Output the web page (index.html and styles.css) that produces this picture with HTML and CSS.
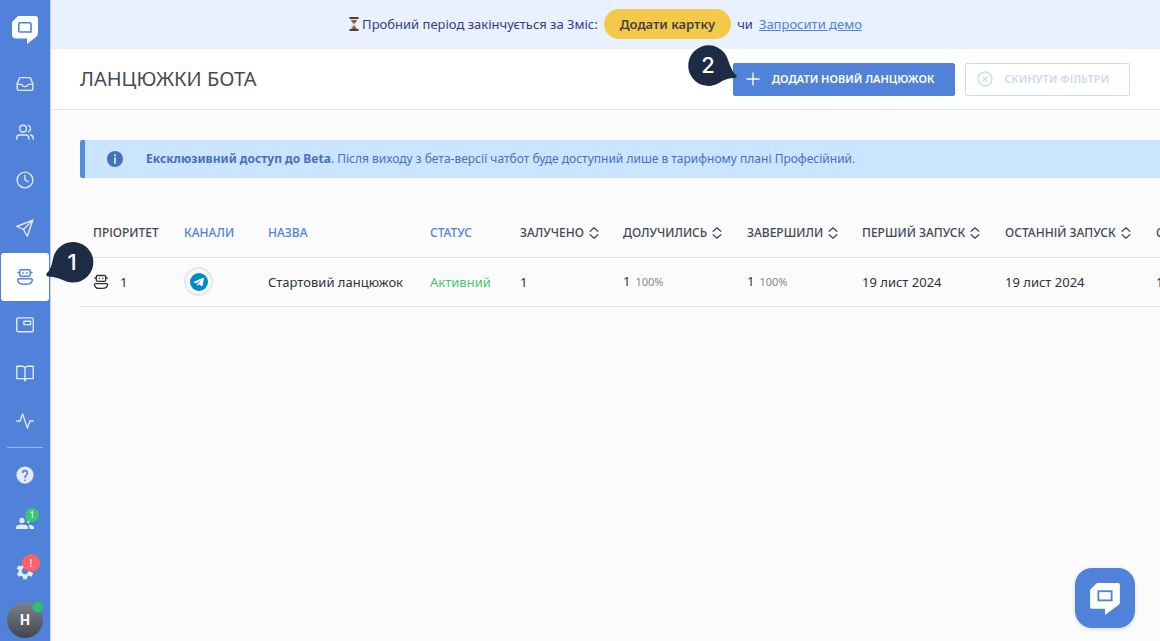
FILE: index.html
```html
<!DOCTYPE html>
<html lang="uk">
<head>
<meta charset="utf-8">
<meta name="viewport" content="width=device-width, initial-scale=1">
<title>Ланцюжки бота</title>
<link rel="stylesheet" href="styles.css">
</head>
<body>
<svg class="defs" aria-hidden="true">
  <symbol id="logo" viewBox="0 0 26 28"><path fill="#fff" d="M6 0H23Q26 0 26 3V17Q26 19.500 24 21L15 28V22.500H4Q0 22.500 0 18.500V6Z"/><path fill="none" stroke="#4f82d9" stroke-width="1.600" d="M8 6.800H17.500Q19 6.800 19 8.300V16H8Q6.800 16 6.800 14.800V8Q6.800 6.800 8 6.800Z"/></symbol>
  <symbol id="chat-logo" viewBox="0 0 26 28"><path fill="#fff" d="M6 0H24.500Q26 0 26 1.500V17Q26 18 25 19L13 28V22.500H1.500Q0 22.500 0 21V6Z"/><rect x="7.200" y="7.200" width="11.600" height="8" fill="none" stroke="#4f82d9" stroke-width="1.600"/></symbol>
  <symbol id="bot" viewBox="0 0 18 18"><g fill="none" stroke="currentColor" stroke-width="1.500" stroke-linecap="round" stroke-linejoin="round"><rect x="3.700" y="1.700" width="10.600" height="6.600" rx="1.500"/><path d="M3.500 4.500H2M14.500 4.500H16M7 4.800V5.200M11 4.800V5.200M3 10.800H15Q16.500 10.800 16.300 12.200Q15.800 16.200 11 16.200H7Q2.200 16.200 1.700 12.200Q1.500 10.800 3 10.800Z"/></g></symbol>
  <symbol id="sort" viewBox="0 0 10 12"><path fill="none" stroke="currentColor" stroke-width="1.200" stroke-linecap="round" stroke-linejoin="round" d="M1.200 4.300L5 .8L8.800 4.300M1.200 7.700L5 11.200L8.800 7.700"/></symbol>
</svg>
<div class="app">
  <nav class="sidebar" aria-label="Головне меню">
    <a class="brand" href="#" aria-label="Головна"><svg width="26" height="28"><use href="#logo"/></svg></a>
    <a class="nav-item" href="#" aria-label="Вхідні"><svg class="line-icon" viewBox="0 0 24 24"><path d="M22 12.500H16.500Q15.500 15.500 12 15.500T7.500 12.500H2M6 3.500H18Q19 3.500 19.500 4.500L22.500 12V18Q22.500 20.500 20 20.500H4Q1.500 20.500 1.500 18V12L4.500 4.500Q5 3.500 6 3.500Z"/></svg></a>
    <a class="nav-item" href="#" aria-label="Контакти"><svg class="line-icon" viewBox="0 0 24 24"><circle cx="9.500" cy="7.500" r="4.500"/><path d="M1 21.500V20Q1 16 5 16H13Q17 16 17 20V21.500M16.500 3.300A4.500 4.500 0 0 1 16.500 11.700M19.500 16Q23 17 23 20.500V21.500"/></svg></a>
    <a class="nav-item" href="#" aria-label="Історія"><svg class="line-icon" viewBox="0 0 24 24"><circle cx="12" cy="12" r="10.500"/><path d="M12 5.500V12L16 14.200"/></svg></a>
    <a class="nav-item" href="#" aria-label="Розсилки"><svg class="line-icon" viewBox="0 0 24 24"><path d="M22.500 1.500L1 10L10 14L15 23ZM22.500 1.500L10 14"/></svg></a>
    <a class="nav-item active" href="#" aria-label="Бот" aria-current="page"><svg class="nav-bot"><use href="#bot"/></svg></a>
    <a class="nav-item" href="#" aria-label="Віджет"><svg class="line-icon" viewBox="0 0 24 24"><rect x="1" y="2.500" width="22" height="18.500" rx="2"/><path d="M10.500 7H19.500V11.500H10.500Z"/></svg></a>
    <a class="nav-item" href="#" aria-label="База знань"><svg class="line-icon" viewBox="0 0 24 24"><path d="M12 5Q11 3 8 3H1V19.500H9Q12 19.500 12 22.500Q12 19.500 15 19.500H23V3H16Q13 3 12 5ZM12 5V22"/></svg></a>
    <a class="nav-item" href="#" aria-label="Активність"><svg class="line-icon" viewBox="0 0 24 24"><path d="M1 12H5.500L8.800 2.500L15.200 21.500L18.500 12H23"/></svg></a>
    <hr class="divider">
    <a class="nav-item" href="#" aria-label="Довідка"><svg class="fill-icon" viewBox="0 0 24 24"><path fill-rule="evenodd" d="M12 .5A11.500 11.500 0 1 0 12 23.500A11.500 11.500 0 1 0 12 .5ZM13 20H11V18H13ZM15 12.200L14.100 13.200Q13 14.300 13 16H11V15.500Q11 13.500 12.200 12.300L13.500 11Q14 10.500 14 9.300Q14 7.300 12 7.300T9.800 9.300H7.800Q7.800 5 12 5T16.300 9.300Q16.300 11 15 12.200Z"/></svg></a>
    <a class="nav-item" href="#" aria-label="Команда"><svg class="fill-icon" viewBox="0 0 24 24"><circle cx="8" cy="8.500" r="3.500"/><path d="M0 20V18Q0 14 8 14T16 18V20ZM15 5A3.500 3.500 0 1 1 15 12Q17 8.500 15 5ZM17 14.200Q24 14.800 24 18V20H18V18Q18 16 16 14.300Z"/></svg><span class="badge badge-green">1</span></a>
    <a class="nav-item" href="#" aria-label="Налаштування"><svg class="fill-icon" viewBox="0 0 24 24"><path fill-rule="evenodd" d="M9.500 1H14.500L15 4.400L17.300 5.700L20.500 4.500L23 8.700L20.300 10.800V13.200L23 15.300L20.500 19.500L17.300 18.300L15 19.600L14.500 23H9.500L9 19.600L6.700 18.300L3.500 19.500L1 15.300L3.700 13.200V10.800L1 8.700L3.500 4.500L6.700 5.700L9 4.400ZM12 7.800A4.200 4.200 0 1 0 12 16.200A4.200 4.200 0 1 0 12 7.800Z"/></svg><span class="badge badge-red">!</span></a>
    <button class="avatar" type="button" aria-label="Профіль">Н<span class="online"></span></button>
    <svg class="marker marker-one" viewBox="0 0 48 42" role="img" aria-label="1"><path d="M2 31Q6 28 8 17A20.300 20.300 0 1 1 19 38.500Q12 35 3 34.500Q0 33.500 2 31Z"/><text x="27" y="28">1</text></svg>
  </nav>
  <div class="content">
    <aside class="trial">
      <svg class="hourglass" viewBox="0 0 10 14" aria-hidden="true"><path fill="#dfe6ea" d="M1.500 1.500H8.500Q8.500 5.500 5.800 7Q8.500 8.500 8.500 12.500H1.500Q1.500 8.500 4.200 7Q1.500 5.500 1.500 1.500Z"/><path fill="#8d6148" d="M2 3H8Q7.500 5.500 5 7Q2.500 5.500 2 3ZM5 8L8 12.500H2Z"/><path fill="#533b30" d="M.5 0H9.500V2H.5ZM.5 12H9.500V14H.5Z"/></svg>
      <span>Пробний період закінчується за 3міс:</span>
      <button class="card-button" type="button">Додати картку</button>
      <span>чи</span>
      <a class="demo-link" href="#">Запросити демо</a>
    </aside>
    <header class="page-header">
      <h1>ЛАНЦЮЖКИ БОТА</h1>
      <div class="actions">
        <button class="button primary" type="button"><svg viewBox="0 0 16 16"><path d="M8 1.500V14.500M1.500 8H14.500"/></svg>ДОДАТИ НОВИЙ ЛАНЦЮЖОК</button>
        <button class="button ghost" type="button" disabled><svg viewBox="0 0 16 16"><circle cx="8" cy="8" r="7"/><path d="M5.700 5.700L10.300 10.300M10.300 5.700L5.700 10.300"/></svg>СКИНУТИ ФІЛЬТРИ</button>
        <svg class="marker marker-two" viewBox="0 0 48 42" role="img" aria-label="2"><path d="M48 30Q44 27 40 15A20.300 20.300 0 1 0 31 38Q38 33 47 33Q50 32 48 30Z"/><text x="20" y="28">2</text></svg>
      </div>
    </header>
    <main>
      <section class="notice">
        <svg viewBox="0 0 16 16" aria-hidden="true"><circle cx="8" cy="8" r="8" fill="#4271be"/><path d="M8 4.100V4.300M8 7.300V11.800" stroke="#d8eaff" stroke-width="1.800" stroke-linecap="square"/></svg>
        <p><strong>Ексклюзивний доступ до Beta</strong>. Після виходу з бета-версії чатбот буде доступний лише в тарифному плані Професійний.</p>
      </section>
      <div class="table-wrap">
        <table>
          <colgroup><col class="c-priority"><col class="c-channel"><col class="c-name"><col class="c-status"><col class="c-involved"><col class="c-joined"><col class="c-finished"><col class="c-first"><col class="c-last"><col class="c-created"></colgroup>
          <thead><tr>
            <th>ПРІОРИТЕТ</th><th class="filter">КАНАЛИ</th><th class="filter">НАЗВА</th><th class="filter">СТАТУС</th>
            <th>ЗАЛУЧЕНО<svg class="sort"><use href="#sort"/></svg></th><th>ДОЛУЧИЛИСЬ<svg class="sort"><use href="#sort"/></svg></th><th>ЗАВЕРШИЛИ<svg class="sort"><use href="#sort"/></svg></th><th>ПЕРШИЙ ЗАПУСК<svg class="sort"><use href="#sort"/></svg></th><th>ОСТАННІЙ ЗАПУСК<svg class="sort"><use href="#sort"/></svg></th><th>СТВОРЕНО</th>
          </tr></thead>
          <tbody><tr>
            <td><span class="priority"><svg class="row-bot"><use href="#bot"/></svg>1</span></td>
            <td><span class="channel"><svg viewBox="0 0 18 18" role="img" aria-label="Telegram"><circle cx="9" cy="9" r="9" fill="#0088cc"/><path fill="#fff" d="M3.300 9L13.300 4.800Q14.200 4.600 14 5.600L12.600 12.500Q12.300 13.600 11.300 13L9 11.300L7.800 12.500Q7.200 12.900 7.100 12L6.700 10.200L3.300 9.300Z"/><path fill="#0088cc" d="M6.900 10L11.300 7L7.900 10.400L7.500 11.500Z"/></svg></span></td>
            <td>Стартовий ланцюжок</td><td class="active-status">Активний</td><td>1</td>
            <td>1<small>100%</small></td><td>1<small>100%</small></td>
            <td>19 лист 2024</td><td>19 лист 2024</td><td>19 лист 2024</td>
          </tr></tbody>
        </table>
      </div>
    </main>
  </div>
</div>
<button class="chat" type="button" aria-label="Відкрити чат"><svg width="30" height="32"><use href="#chat-logo"/></svg></button>
</body>
</html>
```
FILE: styles.css
```css
* { box-sizing: border-box; }
body { margin: 0; background: #fbfbfb; color: #2d333b; font: 13px/20px "Noto Sans", sans-serif; overflow: hidden; }
button { font: inherit; cursor: pointer; }
.defs { position: absolute; width: 0; height: 0; }
.app { display: flex; min-height: 100vh; }

.sidebar { position: relative; z-index: 2; flex: 0 0 51px; display: flex; flex-direction: column; background: #5182d9; border-right: 1px solid #c5d6f4; }
.brand { display: flex; height: 60px; align-items: center; justify-content: center; }
.nav-item { position: relative; display: flex; height: 48px; align-items: center; justify-content: center; color: #e3ebf9; }
.nav-item.active { margin: 1px 1px 0; background: #fff; color: #5182d9; border-radius: 3px; }
.line-icon, .fill-icon { width: 18px; height: 18px; }
.line-icon { fill: none; stroke: currentColor; stroke-width: 1.8; stroke-linecap: round; stroke-linejoin: round; }
.fill-icon { fill: currentColor; }
.nav-bot { width: 18px; height: 18px; }
.row-bot { width: 16px; height: 16px; }
.divider { width: 36px; height: 1px; margin: 2px auto 3px; border: 0; background: #95b3e9; }
.badge { position: absolute; display: flex; align-items: center; justify-content: center; border-radius: 50%; color: #fff; }
.badge-green { top: 9px; right: 11px; width: 14px; height: 14px; background: #3bc574; font-size: 9px; }
.badge-red { top: 7px; right: 10px; width: 18px; height: 18px; background: #ff6266; font-size: 11px; }
.avatar { position: relative; width: 36px; height: 36px; margin: 7px auto 0; padding: 0; border: 0; border-radius: 50%; background: linear-gradient(#7d838c, #40454e); color: #fff; font: 700 14px/36px Roboto, sans-serif; }
.online { position: absolute; top: -1px; right: -1px; width: 12px; height: 12px; border: 1px solid #5182d9; border-radius: 50%; background: #2ec55a; }

.marker { position: absolute; width: 48px; height: 42px; overflow: visible; fill: #1d2b44; }
.marker text { fill: #fff; font: 500 22px Inter, sans-serif; text-anchor: middle; }
.marker-one { top: 242px; left: 45px; }
.marker-two { top: -18px; left: -45px; }

.content { flex: 1; min-width: 0; }
.trial { display: flex; height: 49px; padding-bottom: 1px; align-items: center; justify-content: center; gap: 6px; background: #e9f0fe; color: #333d84; }
.hourglass { width: 10px; height: 14px; margin-right: -3px; }
.card-button { height: 30px; padding: 0 16px; border: 0; border-radius: 15px; background: #f4c94a; color: #434343; font-weight: 600; }
.demo-link { color: #5182d9; }
.page-header { display: flex; height: 61px; padding: 0 30px 0 29px; align-items: center; justify-content: space-between; background: #fff; border-bottom: 1px solid #e1e3e6; }
h1 { margin: 0; color: #454a54; font-size: 20px; font-weight: 400; }
.actions { position: relative; display: flex; gap: 10px; }
.button { display: flex; height: 33px; padding: 0 20px 0 11px; align-items: center; gap: 11px; border: 1px solid #5182d9; border-radius: 2px; font-size: 11px; font-weight: 600; }
.button svg { width: 16px; height: 16px; fill: none; stroke: currentColor; stroke-width: 1.3; }
.primary { background: #5182d9; color: #fff; }
.ghost { border-color: #cbdaf5; background: #fff; color: #cbdaf5; }

main { padding: 30px 0 0 29px; }
.notice { display: flex; height: 38px; padding-left: 22px; align-items: center; gap: 23px; border-left: 5px solid #4f90dc; border-radius: 2px 0 0 2px; background: #cbe4ff; color: #4671bc; font-size: 12px; }
.notice svg { width: 16px; height: 16px; }
.notice p { margin: 0; }
.table-wrap { margin-top: 30px; overflow: hidden; }
table { width: 1200px; table-layout: fixed; border-collapse: collapse; }
th, td { height: 49px; padding: 0 0 0 13px; border-bottom: 1px solid #e1e2e4; text-align: left; white-space: nowrap; }
th { padding-top: 2px; color: #414955; font-size: 12px; font-weight: 500; }
.filter { color: #4f82dd; }
.sort { width: 10px; height: 12px; margin-left: 5px; vertical-align: -2px; }
.c-priority { width: 91px; }
.c-channel { width: 84px; }
.c-name { width: 162px; }
.c-status { width: 90px; }
.c-involved { width: 103px; }
.c-joined { width: 124px; }
.c-finished { width: 115px; }
.c-first { width: 143px; }
.c-last { width: 151px; }
.priority { display: flex; align-items: center; gap: 11px; }
.channel { display: flex; width: 29px; height: 29px; align-items: center; justify-content: center; border: 2px solid #e8e8ea; border-radius: 50%; background: #f8f8f8; }
.channel svg { width: 18px; height: 18px; }
.active-status { color: #3fca68; }
small { margin-left: 5px; color: #858990; font-size: 11px; }

.chat { position: fixed; right: 25px; bottom: 13px; display: flex; width: 60px; height: 60px; padding: 2px 0 0; align-items: center; justify-content: center; border: 0; border-radius: 17px; background: #5182d9; box-shadow: 0 1px 4px #00000022; }
```
